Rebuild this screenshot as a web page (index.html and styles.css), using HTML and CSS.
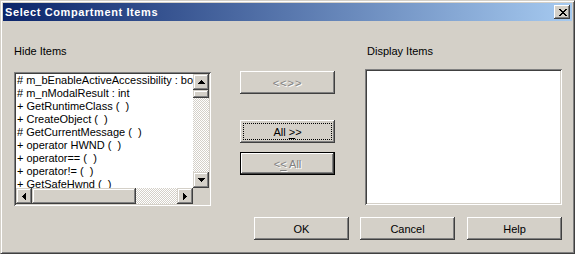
FILE: index.html
```html
<!DOCTYPE html>
<html>
<head>
<title>Select Compartment Items</title>
<link rel="stylesheet" href="styles.css">
</head>
<body>
<div class="window">
	<div class="titlebar">
		<span class="title">Select Compartment Items</span>
		<span class="closeBtn">
			<svg width="8" height="7" viewBox="0 0 8 7" shape-rendering="crispEdges">
				<path d="M0 0h2v1h-2zM6 0h2v1h-2zM1 1h2v1h-2zM5 1h2v1h-2zM2 2h4v1h-4zM3 3h2v1h-2zM2 4h4v1h-4zM1 5h2v1h-2zM5 5h2v1h-2zM0 6h2v1h-2zM6 6h2v1h-2z" fill="#000"/>
			</svg>
		</span>
	</div>
	<div class="client">
		<div class="panes">
			<div class="pane hidePane">
				<div class="label">Hide Items</div>
				<div class="listbox scrolled">
					<div class="items">
						<div class="item"># m_bEnableActiveAccessibility : bool</div>
						<div class="item"># m_nModalResult : int</div>
						<div class="item">+ GetRuntimeClass (&nbsp; )</div>
						<div class="item">+ CreateObject (&nbsp; )</div>
						<div class="item"># GetCurrentMessage (&nbsp; )</div>
						<div class="item">+ operator HWND (&nbsp; )</div>
						<div class="item">+ operator== (&nbsp; )</div>
						<div class="item">+ operator!= (&nbsp; )</div>
						<div class="item">+ GetSafeHwnd (&nbsp; )</div>
					</div>
					<div class="vscroll">
						<span class="sbBtn">
							<svg width="7" height="4" viewBox="0 0 7 4" shape-rendering="crispEdges"><path d="M3 0h1v1h-1zM2 1h3v1h-3zM1 2h5v1h-5zM0 3h7v1h-7z" fill="#000"/></svg>
						</span>
						<span class="sbThumb vThumb"></span>
						<span class="sbTrack"></span>
						<span class="sbBtn">
							<svg width="7" height="4" viewBox="0 0 7 4" shape-rendering="crispEdges"><path d="M0 0h7v1h-7zM1 1h5v1h-5zM2 2h3v1h-3zM3 3h1v1h-1z" fill="#000"/></svg>
						</span>
					</div>
					<div class="hscroll">
						<span class="sbBtn">
							<svg width="4" height="7" viewBox="0 0 4 7" shape-rendering="crispEdges"><path d="M3 0h1v7h-1zM2 1h1v5h-1zM1 2h1v3h-1zM0 3h1v1h-1z" fill="#000"/></svg>
						</span>
						<span class="sbThumb hThumb"></span>
						<span class="sbTrack"></span>
						<span class="sbBtn">
							<svg width="4" height="7" viewBox="0 0 4 7" shape-rendering="crispEdges"><path d="M0 0h1v7h-1zM1 1h1v5h-1zM2 2h1v3h-1zM3 3h1v1h-1z" fill="#000"/></svg>
						</span>
					</div>
					<div class="corner"></div>
				</div>
			</div>

			<div class="movers">
				<span class="btn disabled moveOne"><span class="caption wide">&lt;&lt;&gt;&gt;</span></span>
				<span class="btn focused moveAll"><span class="focusRect"><span class="caption">All <u>&gt;</u>&gt;</span></span></span>
				<span class="btn disabled default removeAll"><span class="caption">&lt;<u>&lt;</u> All</span></span>
			</div>

			<div class="pane showPane">
				<div class="label">Display Items</div>
				<div class="listbox empty"></div>
			</div>
		</div>

		<div class="actions">
			<span class="btn"><span class="caption">OK</span></span>
			<span class="btn"><span class="caption">Cancel</span></span>
			<span class="btn"><span class="caption">Help</span></span>
		</div>
	</div>
</div>
</body>
</html>
```

FILE: styles.css
```css
BODY {
	margin:0;
	font-family:"Liberation Sans", Arial, sans-serif;
	font-size:11px;
	color:#000;
	background:#d4d0c8;
}

.window {
	box-sizing:border-box;
	width:575px;
	height:254px;
	padding:2px;
	border:1px solid;
	border-color:#d4d0c8 #404040 #404040 #d4d0c8;
	box-shadow:inset 1px 1px #fff, inset -1px -1px #808080;
	background:#d4d0c8;
	display:flex;
	flex-direction:column;
}

/* caption */
.titlebar {
	height:18px;
	display:flex;
	align-items:center;
	justify-content:space-between;
	padding:0 2px 0 2px;
	background:linear-gradient(to right, #0a246a, #a6caf0);
}

.title {
	color:#fff;
	font-weight:bold;
	font-size:11px;
	letter-spacing:0.6px;
}

.closeBtn {
	box-sizing:border-box;
	width:16px;
	height:14px;
	display:flex;
	align-items:center;
	justify-content:center;
	padding-left:1px;
	background:#d4d0c8;
	box-shadow:inset -1px -1px #404040, inset 1px 1px #fff, inset -2px -2px #808080;
}

/* body of the dialog */
.client {
	flex:1;
	display:flex;
	flex-direction:column;
}

.panes {
	display:flex;
	padding:24px 0 0 11px;
}

.pane {
	width:197px;
	display:flex;
	flex-direction:column;
}

.label {
	line-height:13px;
	height:13px;
}

.hidePane .label {
	margin-bottom:14px;
}

.showPane {
	margin-left:30px;
}

.showPane .label {
	margin-bottom:11px;
	padding-left:2px;
}

.listbox {
	box-sizing:border-box;
	padding:2px;
	background:#fff;
	box-shadow:inset 1px 1px #808080, inset -1px -1px #fff, inset 2px 2px #404040, inset -2px -2px #d4d0c8;
}

.listbox.scrolled {
	height:134px;
	display:grid;
	grid-template-columns:1fr 16px;
	grid-template-rows:1fr 16px;
}

.listbox.empty {
	height:136px;
}

.items {
	overflow:hidden;
	min-width:0;
}

.item {
	height:13px;
	line-height:13px;
	padding-left:1px;
	white-space:nowrap;
}

/* scroll bars */
.vscroll {
	display:flex;
	flex-direction:column;
}

.hscroll {
	display:flex;
}

.sbBtn, .sbThumb {
	box-sizing:border-box;
	width:16px;
	height:16px;
	display:flex;
	align-items:center;
	justify-content:center;
	background:#d4d0c8;
	box-shadow:inset -1px -1px #404040, inset 1px 1px #d4d0c8, inset -2px -2px #808080, inset 2px 2px #fff;
}

.vThumb {
	height:8px;
}

.hThumb {
	width:104px;
}

.sbTrack {
	flex:1;
	background:repeating-conic-gradient(#d4d0c8 0 25%, #fff 0 50%) 0 0/2px 2px;
}

.corner {
	background:#d4d0c8;
}

/* push buttons */
.btn {
	box-sizing:border-box;
	width:95px;
	height:23px;
	display:flex;
	align-items:center;
	justify-content:center;
	background:#d4d0c8;
	box-shadow:inset -1px -1px #404040, inset 1px 1px #fff, inset -2px -2px #808080, inset 2px 2px #d4d0c8;
}

.caption {
	white-space:pre;
}

.caption.wide {
	letter-spacing:1px;
}

.btn.disabled {
	color:#808080;
	text-shadow:1px 1px 0 #fff;
}

.btn.default {
	border:1px solid #000;
	box-shadow:inset -1px -1px #404040, inset 1px 1px #fff, inset -2px -2px #808080;
}

.btn u {
	text-decoration-thickness:1px;
	text-underline-offset:2px;
}

.movers {
	margin-left:29px;
	display:flex;
	flex-direction:column;
	padding-top:26px;
}

.moveAll {
	margin-top:26px;
}

.removeAll {
	margin-top:9px;
}

.focusRect {
	box-sizing:border-box;
	width:89px;
	height:17px;
	display:flex;
	align-items:center;
	justify-content:center;
	border:1px dotted #000;
}

.actions {
	display:flex;
	justify-content:flex-end;
	padding:11px 10px 0 0;
}

.actions .btn + .btn {
	margin-left:11px;
}

.actions .btn:last-child {
	margin-left:12px;
}
```
